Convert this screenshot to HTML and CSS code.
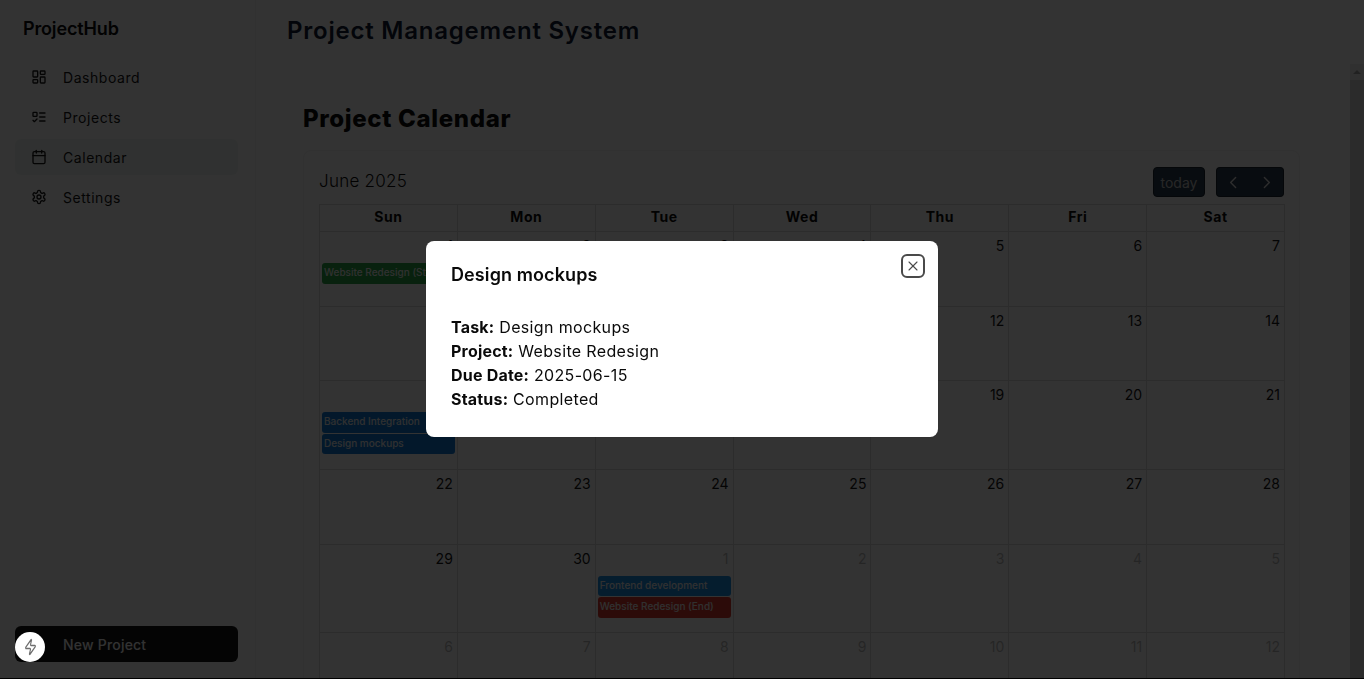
FILE: index.html
```html
<!DOCTYPE html>
<html lang="en">
<head>
<meta charset="utf-8">
<title>Project Calendar</title>
<link rel="stylesheet" href="styles.css">
</head>
<body>
<div class="app">
  <aside class="sidebar">
    <div class="logo">ProjectHub</div>
    <nav class="nav">
      <a class="nav-item"><svg class="icon" viewBox="0 0 24 24"><rect x="3" y="3" width="7" height="9" rx="1"/><rect x="14" y="3" width="7" height="5" rx="1"/><rect x="14" y="12" width="7" height="9" rx="1"/><rect x="3" y="16" width="7" height="5" rx="1"/></svg>Dashboard</a>
      <a class="nav-item"><svg class="icon" viewBox="0 0 24 24"><rect x="3" y="5" width="6" height="6" rx="1"/><path d="m3 17 2 2 4-4"/><path d="M13 6h8"/><path d="M13 12h8"/><path d="M13 18h8"/></svg>Projects</a>
      <a class="nav-item active"><svg class="icon" viewBox="0 0 24 24"><path d="M8 2v4"/><path d="M16 2v4"/><rect x="3" y="4" width="18" height="18" rx="2"/><path d="M3 10h18"/></svg>Calendar</a>
      <a class="nav-item"><svg class="icon" viewBox="0 0 24 24"><path d="M12.22 2h-.44a2 2 0 0 0-2 2v.18a2 2 0 0 1-1 1.73l-.43.25a2 2 0 0 1-2 0l-.15-.08a2 2 0 0 0-2.73.73l-.22.38a2 2 0 0 0 .73 2.73l.15.1a2 2 0 0 1 1 1.72v.51a2 2 0 0 1-1 1.74l-.15.09a2 2 0 0 0-.73 2.73l.22.38a2 2 0 0 0 2.73.73l.15-.08a2 2 0 0 1 2 0l.43.25a2 2 0 0 1 1 1.73V20a2 2 0 0 0 2 2h.44a2 2 0 0 0 2-2v-.18a2 2 0 0 1 1-1.73l.43-.25a2 2 0 0 1 2 0l.15.08a2 2 0 0 0 2.73-.73l.22-.39a2 2 0 0 0-.73-2.73l-.15-.08a2 2 0 0 1-1-1.74v-.5a2 2 0 0 1 1-1.74l.15-.09a2 2 0 0 0 .73-2.73l-.22-.38a2 2 0 0 0-2.73-.73l-.15.08a2 2 0 0 1-2 0l-.43-.25a2 2 0 0 1-1-1.73V4a2 2 0 0 0-2-2z"/><circle cx="12" cy="12" r="3"/></svg>Settings</a>
    </nav>
    <button class="new-project">New Project</button>
  </aside>
  <div class="main">
    <header class="topbar"><h1>Project Management System</h1></header>
    <div class="scroll-row">
      <main class="content">
        <h2>Project Calendar</h2>
        <section class="card">
          <div class="toolbar">
            <div class="month">June 2025</div>
            <div class="tools">
              <button class="btn today">today</button>
              <div class="btn-group">
                <button class="btn arrow"><svg viewBox="0 0 24 24"><path d="m15 5-7 7 7 7"/></svg></button>
                <button class="btn arrow"><svg viewBox="0 0 24 24"><path d="m9 5 7 7-7 7"/></svg></button>
              </div>
            </div>
          </div>
          <div class="calendar">
            <div class="dow">Sun</div><div class="dow">Mon</div><div class="dow">Tue</div><div class="dow">Wed</div><div class="dow">Thu</div><div class="dow">Fri</div><div class="dow">Sat</div>

            <div class="day"><div class="num">1</div><div class="event green">Website Redesign (Start)</div></div>
            <div class="day"><div class="num">2</div></div>
            <div class="day"><div class="num">3</div></div>
            <div class="day"><div class="num">4</div></div>
            <div class="day"><div class="num">5</div></div>
            <div class="day"><div class="num">6</div></div>
            <div class="day"><div class="num">7</div></div>

            <div class="day"><div class="num">8</div></div>
            <div class="day"><div class="num">9</div></div>
            <div class="day"><div class="num">10</div></div>
            <div class="day"><div class="num">11</div></div>
            <div class="day"><div class="num">12</div></div>
            <div class="day"><div class="num">13</div></div>
            <div class="day"><div class="num">14</div></div>

            <div class="day"><div class="num">15</div><div class="event blue-dark">Backend Integration</div><div class="event blue-dark">Design mockups</div></div>
            <div class="day"><div class="num">16</div></div>
            <div class="day"><div class="num">17</div></div>
            <div class="day"><div class="num">18</div></div>
            <div class="day"><div class="num">19</div></div>
            <div class="day"><div class="num">20</div></div>
            <div class="day"><div class="num">21</div></div>

            <div class="day"><div class="num">22</div></div>
            <div class="day"><div class="num">23</div></div>
            <div class="day"><div class="num">24</div></div>
            <div class="day"><div class="num">25</div></div>
            <div class="day"><div class="num">26</div></div>
            <div class="day"><div class="num">27</div></div>
            <div class="day"><div class="num">28</div></div>

            <div class="day"><div class="num">29</div></div>
            <div class="day"><div class="num">30</div></div>
            <div class="day"><div class="num other">1</div><div class="event blue">Frontend development</div><div class="event red">Website Redesign (End)</div></div>
            <div class="day"><div class="num other">2</div></div>
            <div class="day"><div class="num other">3</div></div>
            <div class="day"><div class="num other">4</div></div>
            <div class="day"><div class="num other">5</div></div>

            <div class="day"><div class="num other">6</div></div>
            <div class="day"><div class="num other">7</div></div>
            <div class="day"><div class="num other">8</div></div>
            <div class="day"><div class="num other">9</div></div>
            <div class="day"><div class="num other">10</div></div>
            <div class="day"><div class="num other">11</div></div>
            <div class="day"><div class="num other">12</div></div>
          </div>
        </section>
      </main>
      <div class="scrollbar"><div class="scroll-up"><span class="tri"></span></div><div class="scroll-thumb"></div></div>
    </div>
  </div>
</div>

<div class="overlay">
  <div class="modal">
    <h3>Design mockups</h3>
    <p class="line"><b>Task:</b> Design mockups</p>
    <p class="line"><b>Project:</b> Website Redesign</p>
    <p class="line"><b>Due Date:</b> 2025-06-15</p>
    <p class="line"><b>Status:</b> Completed</p>
    <button class="close" aria-label="Close"><svg viewBox="0 0 24 24"><path d="M18 6 6 18"/><path d="m6 6 12 12"/></svg></button>
  </div>
</div>

<div class="dev-badge"><svg viewBox="0 0 24 24" preserveAspectRatio="none"><path d="M4 14a1 1 0 0 1-.78-1.63l9.9-10.2a.5.5 0 0 1 .86.46l-1.92 6.02A1 1 0 0 0 13 10h7a1 1 0 0 1 .78 1.63l-9.9 10.2a.5.5 0 0 1-.86-.46l1.92-6.02A1 1 0 0 0 11 14z"/></svg></div>
</body>
</html>
```
FILE: styles.css
```css
* { box-sizing: border-box; }
html, body { margin: 0; height: 100%; overflow: hidden; }
body { background: #000; font-family: Inter, "Liberation Sans", sans-serif; color: #0a0a0a; }
button { font-family: inherit; }

.app { display: flex; height: 678px; background: #fdfdfd; }

.sidebar { width: 256px; flex: none; display: flex; flex-direction: column; padding: 0 17px 16px 15px; background: #fff; border-right: 1px solid #f2f2f2; }
.logo { font-size: 18px; font-weight: 600; letter-spacing: -0.15px; line-height: 28px; padding: 15px 8px 0; height: 59px; color: #0a0a0a; }
.nav { display: flex; flex-direction: column; gap: 4px; flex: 1; }
.nav-item { height: 36px; display: flex; align-items: center; gap: 16px; padding: 0 16px; font-size: 14px; font-weight: 400; letter-spacing: 0.55px; border-radius: 6px; color: #171717; }
.nav-item.active { background: #f1f6f3; }
.icon { width: 16px; height: 16px; flex: none; fill: none; stroke: currentColor; stroke-width: 2; stroke-linecap: round; stroke-linejoin: round; }
.new-project { height: 36px; border: 0; border-radius: 6px; background: #171717; color: #fafafa; font-size: 14px; font-weight: 500; letter-spacing: 0.2px; text-align: left; padding: 0 0 0 48px; }

.main { flex: 1; min-width: 0; display: flex; flex-direction: column; }
.topbar { height: 64px; flex: none; padding: 0 31px; display: flex; align-items: center; background: #fff; }
h1 { margin: 0 0 3px; font-size: 24px; font-weight: 600; letter-spacing: 0.78px; line-height: 32px; color: #0f1b33; }
.scroll-row { flex: 1; min-height: 0; display: flex; }
.content { flex: 1; min-width: 0; overflow: hidden; padding: 39px 50px 0 47px; }
h2 { margin: 0 0 15px; font-size: 24px; font-weight: 800; line-height: 32px; letter-spacing: 0.65px; color: #0a0a0a; }
.card { background: #fff; border: 1px solid #f3f3f3; border-radius: 8px; padding: 16px 15px 0; }
.toolbar { display: flex; justify-content: space-between; align-items: center; height: 30px; margin-bottom: 7px; }
.month { font-size: 17px; font-weight: 300; letter-spacing: 0.25px; padding-bottom: 2px; color: #0a0a0a; }
.tools { display: flex; gap: 11px; }
.btn { height: 30px; border: 1px solid #1a252f; background: #2c3e50; color: #fff; border-radius: 4px; padding: 0; display: flex; align-items: center; justify-content: center; }
.today { width: 52px; font-size: 14px; color: #c4c4c4; }
.btn-group { display: flex; }
.arrow { width: 34px; }
.arrow:first-child { border-radius: 4px 0 0 4px; border-right: 0; }
.arrow:last-child { border-radius: 0 4px 4px 0; border-left: 0; }
.arrow svg { width: 17px; height: 17px; fill: none; stroke: #e0e0e0; stroke-width: 2; stroke-linecap: round; stroke-linejoin: round; }

.calendar { display: grid; grid-template-columns: repeat(7, 1fr); width: 966px; border-top: 1px solid #ddd; border-left: 1px solid #ddd; }
.dow { height: 27px; line-height: 24px; text-align: center; font-size: 14px; font-weight: 700; letter-spacing: 0.5px; border-right: 1px solid #ddd; border-bottom: 1px solid #ddd; color: #0a0a0a; }
.day { min-height: 74.7px; padding: 0 2px 13.5px; border-right: 1px solid #ddd; border-bottom: 1px solid #ddd; }
.num { height: 31px; padding: 3px 2px 0 0; text-align: right; font-size: 14px; line-height: 22px; color: #171717; }
.num.other { opacity: 0.3; }
.event { height: 20.5px; margin-bottom: 1px; padding: 0 2px; font-size: 10px; font-weight: 500; line-height: 18px; white-space: nowrap; overflow: hidden; color: #f0f0f0; border-radius: 3px; }
.green { background: #28a745; }
.blue-dark { background: #0f7bd8; }
.blue { background: #1b8fe6; }
.red { background: #dc3b2f; }

.scrollbar { width: 14px; flex: none; display: flex; flex-direction: column; background: #f1f1f1; }
.scroll-up { height: 16px; display: flex; align-items: center; justify-content: center; }
.tri { width: 0; height: 0; border-left: 4px solid transparent; border-right: 4px solid transparent; border-bottom: 4px solid #a3a3a3; }
.scroll-thumb { flex: 1; background: #d6d6d6; }

.overlay { position: fixed; inset: 0; padding-bottom: 1px; background: rgba(0, 0, 0, 0.8); display: flex; align-items: center; justify-content: center; }
.modal { position: relative; width: 512px; height: 196px; background: #fff; border-radius: 8px; padding: 20px 25px; box-shadow: 0 1px 3px rgba(0, 0, 0, 0.1); }
h3 { margin: 0 0 26px; font-size: 18px; font-weight: 600; line-height: 28px; letter-spacing: 0.1px; color: #0a0a0a; }
.line { margin: 0; font-size: 16px; line-height: 24px; font-weight: 400; letter-spacing: 0.35px; color: #0a0a0a; }
.line b { font-weight: 700; letter-spacing: 0.2px; }
.close { position: absolute; top: 13px; right: 13px; width: 24px; height: 24px; padding: 0; background: #fff; border: 2px solid #4a4a4a; border-radius: 6px; display: flex; align-items: center; justify-content: center; }
.close svg { width: 16px; height: 16px; fill: none; stroke: #4a4a4a; stroke-width: 1.6; stroke-linecap: round; stroke-linejoin: round; }

.dev-badge { position: fixed; left: 15px; top: 632px; width: 30px; height: 30px; border-radius: 50%; background: #fff; display: flex; align-items: center; justify-content: center; }
.dev-badge svg { width: 13px; height: 18px; fill: none; stroke: #6e6e6e; stroke-width: 2; stroke-linejoin: round; stroke-linecap: round; }
```
